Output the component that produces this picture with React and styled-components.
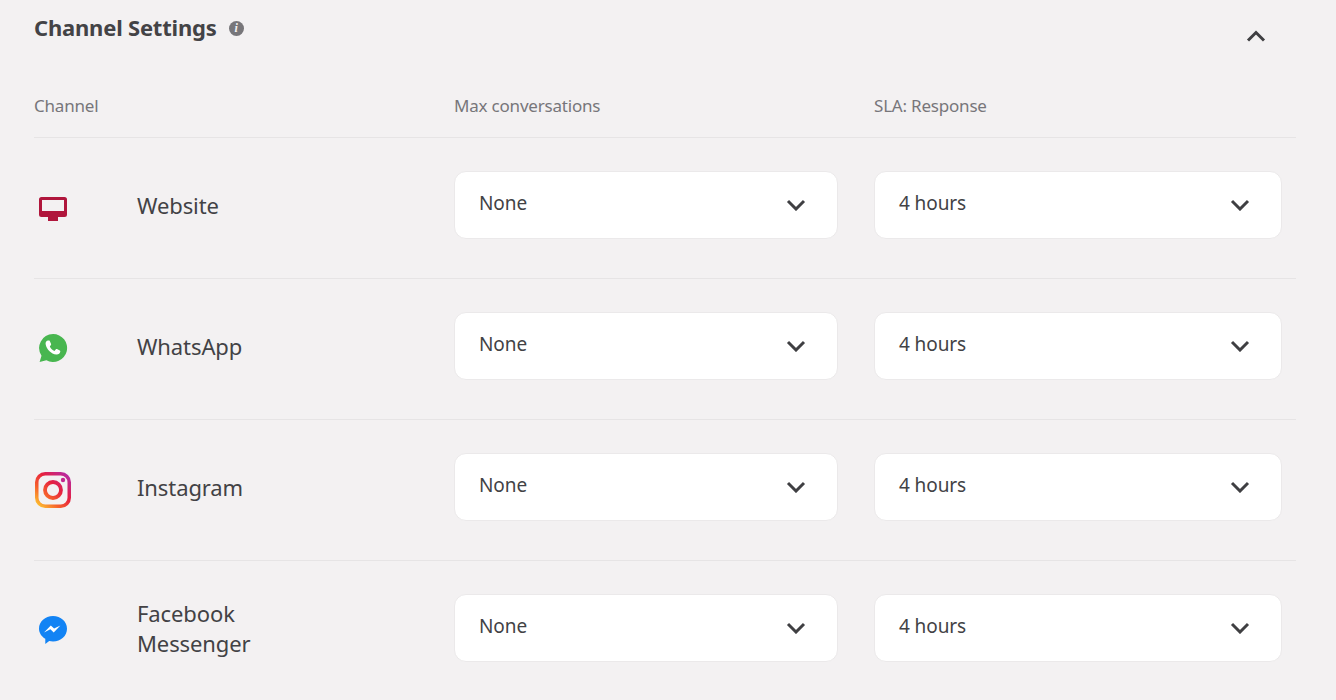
import React from "react";
import styled, { createGlobalStyle } from "styled-components";

const Global = createGlobalStyle`
  html, body { margin: 0; padding: 0; background: #f3f1f2; }
  body { font-family: "Noto Sans", "Open Sans", sans-serif; color: #3f3f42; overflow: hidden; }
`;
const Page = styled.div`
  width: 1336px; height: 700px; box-sizing: border-box; padding: 0 40px 0 34px; overflow: hidden;
`;
const Header = styled.header`
  display: flex; justify-content: space-between; height: 94px; padding-top: 11px; box-sizing: border-box;
`;
const TitleWrap = styled.div`
  display: flex; align-items: flex-start; gap: 12px;
`;
const Title = styled.h2`
  margin: 0; font-size: 22px; line-height: 32px; font-weight: 700; color: #434346; letter-spacing: -0.2px;
`;
const InfoBadge = styled.span`
  margin-top: 10px; width: 15px; height: 15px; border-radius: 50%; background: #77767a; color: #f3f1f2;
  display: flex; align-items: center; justify-content: center;
  font: italic 700 12px/15px "Liberation Serif", serif;
`;
const Collapse = styled.button`
  border: 0; background: none; padding: 0; margin: 15px 30px 0 0; width: 20px; height: 20px; color: #3f3f42;
  display: flex; align-items: center; justify-content: center;
`;
const HeadRow = styled.div`
  display: grid; grid-template-columns: 420px 420px 1fr; height: 43px; align-items: start;
  font-size: 17px; line-height: 24px; color: #77767a; letter-spacing: -0.2px;
`;
const Row = styled.div`
  display: grid; grid-template-columns: 103px 317px 420px 1fr; height: 141px; box-sizing: border-box;
  border-top: 1px solid #e6e4e5; align-items: center;
`;
const IconCell = styled.div`
  display: flex; align-items: center; width: 38px; justify-content: center; margin-top: -1px;
`;
const Name = styled.div`
  font-size: 22px; line-height: 30px; color: #424245; width: 140px; margin-top: -7px; letter-spacing: -0.1px;
`;
const Select = styled.div`
  box-sizing: border-box; width: ${p => p.$w}px; height: 68px; background: #fff; border: 1px solid #ebe9ea; border-radius: 12px;
  display: flex; align-items: center; justify-content: space-between; padding: 0 ${p => p.$pr}px 0 24px;
  font-size: 19px; color: #424245; align-self: start; margin-top: 33px; letter-spacing: -0.1px;
`;
const SelectText = styled.span`
  position: relative; top: -2px;
`;

const Chevron = ({ up }) => (
  <svg width="20" height="12" viewBox="0 0 20 12" fill="none" stroke="#3f3f42" strokeWidth="3">
    <path d={up ? "M2 10.500 10 2.500l8 8" : "M2 2l8 8 8-8"} />
  </svg>
);

const Monitor = () => (
  <svg width="28" height="26" viewBox="0 -2 28 26">
    <path fill="#b0163c" fillRule="evenodd" d="M2.500 0h23A2.500 2.500 0 0 1 28 2.500v15a2.500 2.500 0 0 1-2.500 2.500H19v4H9v-4H2.500A2.500 2.500 0 0 1 0 17.500v-15A2.500 2.500 0 0 1 2.500 0ZM3 3v11h22V3Z" />
  </svg>
);
const WhatsApp = () => (
  <svg width="30" height="30" viewBox="0 1 30 30">
    <path fill="#48b650" d="M15 1a14 14 0 1 1-6.600 26.300L1.600 29l1.900-6.300A14 14 0 0 1 15 1Z" />
    <path fill="#fff" d="M10.700 7.500c.5 0 .9 0 1.200.7l1.200 2.800c.1.400 0 .8-.2 1.100l-1.100 1.300c1 2 2.600 3.500 4.700 4.500l1.400-1.600c.3-.3.700-.4 1.100-.2l2.800 1.300c.5.300.6.600.5 1.100-.2 1.900-2 3.200-3.900 3-5.400-.7-10-5.200-10.800-10.600-.2-1.500.6-3.400 2.600-3.400Z" />
  </svg>
);
const Instagram = () => (
  <svg width="36" height="36" viewBox="0 0 36 36" fill="none">
    <defs>
      <linearGradient id="ig" gradientUnits="userSpaceOnUse" x1="3" y1="34" x2="33" y2="2">
        <stop offset="0" stopColor="#fdc130" />
        <stop offset="0.3" stopColor="#f6612c" />
        <stop offset="0.6" stopColor="#e6203f" />
        <stop offset="1" stopColor="#b52aa6" />
      </linearGradient>
    </defs>
    <rect x="1.750" y="1.750" width="32.500" height="32.500" rx="8.500" stroke="url(#ig)" strokeWidth="3.500" />
    <circle cx="18" cy="18" r="8" stroke="url(#ig)" strokeWidth="3.800" />
    <circle cx="28" cy="8" r="2.200" fill="#c4278f" />
  </svg>
);
const Messenger = () => (
  <svg width="30" height="30" viewBox="0 1 30 30">
    <path fill="#1283f4" d="M15 1c7.900 0 14 5.600 14 12.700S22.900 26.400 15 26.400c-1.300 0-2.600-.2-3.800-.5L7.300 29v-5.200C3.500 21.400 1 17.800 1 13.700 1 6.600 7.100 1 15 1Z" />
    <path fill="#fff" d="m6 17.500 6.800-7 3.300 3.100 6.300-3.100-6.700 7-3.300-3.200Z" />
  </svg>
);

const channels = [
  { name: "Website", Icon: Monitor },
  { name: "WhatsApp", Icon: WhatsApp },
  { name: "Instagram", Icon: Instagram },
  { name: "Facebook Messenger", Icon: Messenger },
];

export default function App() {
  return (
    <Page>
      <Global />
      <Header>
        <TitleWrap>
          <Title>Channel Settings</Title>
          <InfoBadge>i</InfoBadge>
        </TitleWrap>
        <Collapse aria-label="Collapse"><Chevron up /></Collapse>
      </Header>
      <HeadRow>
        <span>Channel</span>
        <span>Max conversations</span>
        <span>SLA: Response</span>
      </HeadRow>
      {channels.map(({ name, Icon }) => (
        <Row key={name}>
          <IconCell><Icon /></IconCell>
          <Name>{name}</Name>
          <Select $w={384} $pr={31}>
            <SelectText>None</SelectText>
            <Chevron />
          </Select>
          <Select $w={408} $pr={31}>
            <SelectText>4 hours</SelectText>
            <Chevron />
          </Select>
        </Row>
      ))}
    </Page>
  );
}
